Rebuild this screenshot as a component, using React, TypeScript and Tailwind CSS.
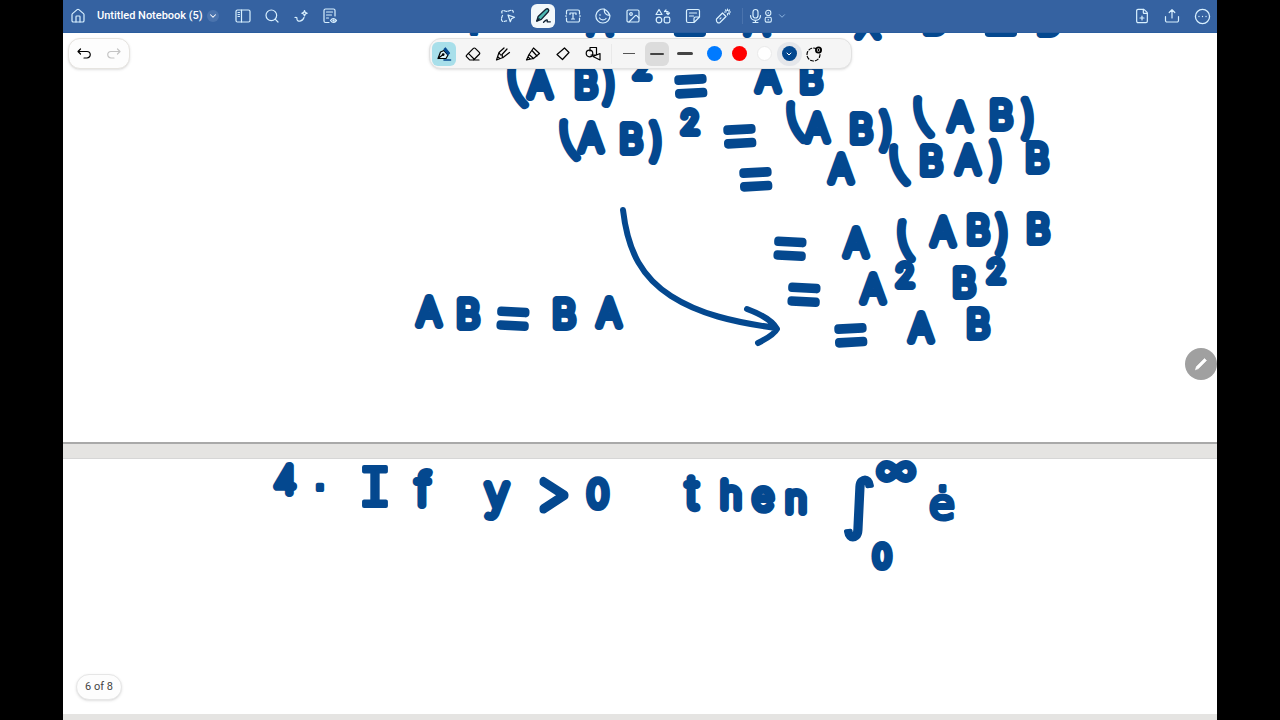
import type { ReactNode } from "react";
import {
  ChevronDown,
  CircleEllipsis,
  Eraser,
  FilePlus,
  House,
  Image,
  Search,
} from "lucide-react";

type Kind = "letter" | "small" | "bracket" | "equals" | "serif" | "tall" | "wide" | "angle" | "dotted";
type Mark = [char: string, x: number, y: number, kind?: Kind, angle?: number];

const kinds: Record<Kind, string> = {
  letter: "font-['Inter'] font-thin text-[36px] stroke-[8px]",
  small: "font-['Inter'] font-thin text-[30px] stroke-[8px]",
  bracket: "font-['Inter'] font-thin text-[42px] stroke-[8px]",
  equals: "font-['Inter'] font-thin text-[72px] stroke-[8px]",
  serif: "font-['DejaVu_Sans_Mono'] text-[54px] stroke-[4px]",
  tall: "font-['DejaVu_Sans'] text-[64px] stroke-[4px]",
  wide: "font-['Inter'] font-thin text-[44px] stroke-[8px]",
  angle: "font-['Inter'] font-thin text-[54px] stroke-[8px]",
  dotted: "font-['DejaVu_Sans'] text-[42px] stroke-[4px]",
};

const proof: Mark[][] = [
  [[".", 474, 34, "dotted"], ["A", 600, 34], ["=", 690, 46, "equals"], ["A", 757, 34], ["X", 868, 37], ["B", 934, 33], ["=", 1001, 46, "equals"], ["B", 1048, 34]],
  [["(", 520, 103, "bracket", -20], ["A", 540, 97], ["B", 586, 97], [")", 609, 98, "bracket"], ["2", 642, 78, "small"], ["=", 692, 108, "equals", -3], ["A", 768, 91], ["B", 811, 92]],
  [["(", 572, 156, "bracket", -20], ["A", 591, 151], ["B", 631, 152], [")", 656, 155, "bracket"], ["2", 690, 133, "small"], ["=", 741, 158, "equals", -3], ["(", 799, 138, "bracket", -20], ["A", 817, 141], ["B", 861, 142], [")", 886, 144, "bracket"], ["(", 926, 133, "bracket", -20], ["A", 960, 130], ["B", 1001, 128], [")", 1028, 132, "bracket"]],
  [["=", 757, 201, "equals", -3], ["A", 841, 182], ["(", 902, 181, "bracket", -20], ["B", 931, 174], ["A", 968, 173], [")", 996, 174, "bracket"], ["B", 1037, 171]],
  [["=", 789, 268, "equals", 3], ["A", 856, 256], ["(", 907, 256, "bracket", -14], ["A", 943, 245], ["B", 978, 243], [")", 1002, 247, "bracket"], ["B", 1038, 242]],
  [["=", 803, 314, "equals", 3], ["A", 873, 302], ["2", 905, 286, "small"], ["B", 964, 296], ["2", 996, 282, "small"]],
  [["=", 852, 357, "equals", -3], ["A", 921, 341], ["B", 978, 337]],
  [["A", 429, 325], ["B", 468, 327], ["=", 512, 338, "equals", 3], ["B", 564, 327], ["A", 609, 326]],
];

const question: Mark[][] = [
  [["4", 285, 493], [".", 320, 490, "dotted"]],
  [["I", 375, 506, "serif"], ["f", 423, 505, "wide"]],
  [["y", 497, 508, "wide"], [">", 553, 511, "angle"], ["0", 598, 507]],
  [["t", 692, 508, "wide"], ["h", 731, 508], ["e", 763, 509], ["n", 796, 512]],
  [["∫", 859, 526, "tall"], ["∞", 896, 485, "wide"], ["0", 882, 567, "small"]],
  [["ė", 942, 519, "dotted"]],
];

function Ink({ lines }: { lines: Mark[][] }) {
  return (
    <g className="fill-[#04488f] stroke-[#04488f]" strokeLinejoin="round" textAnchor="middle">
      {lines.map((line, i) => (
        <text key={i}>
          {line.map(([char, x, y, kind = "letter", angle = 0], j) => (
            <tspan key={j} x={x} y={y} rotate={angle} className={kinds[kind]}>
              {char}
            </tspan>
          ))}
        </text>
      ))}
    </g>
  );
}

function Glyph({ children, size = "size-4" }: { children: ReactNode; size?: string }) {
  return (
    <svg
      viewBox="0 0 16 16"
      className={size}
      fill="none"
      stroke="currentColor"
      strokeWidth="1.2"
      strokeLinecap="round"
      strokeLinejoin="round"
    >
      {children}
    </svg>
  );
}

function Tool({ label, width = "w-[30px]", children }: { label: string; width?: string; children: ReactNode }) {
  return (
    <button type="button" aria-label={label} className={`flex h-6 shrink-0 items-center justify-center ${width}`}>
      {children}
    </button>
  );
}

function Header() {
  return (
    <header className="grid h-[33px] shrink-0 grid-cols-[1fr_auto_1fr] items-center border-b border-[#2a5d9e] bg-[#3562a1] text-[#d8f0ff]">
      <div className="flex items-center">
        <Tool label="Home">
          <House className="size-4" strokeWidth={1.8} />
        </Tool>
        <button type="button" className="mr-2.5 ml-1 flex items-center gap-1 font-['Roboto',sans-serif] text-[11px] font-medium whitespace-nowrap text-white">
          Untitled Notebook (5)
          <span className="flex size-3 items-center justify-center rounded-full bg-[#4a73ad]">
            <ChevronDown className="size-2.5" strokeWidth={2.5} />
          </span>
        </button>
        <Tool label="Sidebar" width="w-[29px]">
          <Glyph>
            <rect x="1" y="2" width="14" height="12" rx="1.5" />
            <path d="M6.5 2v12M3 4.5h1.5M3 6.5h1.5M3 8.5h1.5" />
          </Glyph>
        </Tool>
        <Tool label="Search" width="w-[29px]">
          <Search className="size-4" strokeWidth={1.8} />
        </Tool>
        <Tool label="Ask AI" width="w-[29px]">
          <Glyph>
            <path d="M2 9.5c2-.7 2 .5 2 2 .3 2.5 5.5 2.5 7-2M11.5 2.5l.8 1.9 1.9.8-1.9.8-.8 1.9-.8-1.9-1.9-.8 1.9-.8z" />
          </Glyph>
        </Tool>
        <Tool label="Outline" width="w-[29px]">
          <Glyph>
            <path d="M7 14.5H3.5A1.5 1.5 0 0 1 2 13V2.5A1.5 1.5 0 0 1 3.5 1h8A1.5 1.5 0 0 1 13 2.5V8M4.5 4h6M4.5 7h5M4.5 10h2" />
            <path d="M8.5 12.5q2.7-4 6 0-3.3 4-6 0z" />
            <circle cx="11.5" cy="12.5" r=".6" />
          </Glyph>
        </Tool>
      </div>

      <div className="flex items-center">
        <div className="mr-[5px]">
          <Tool label="Lasso">
            <Glyph>
              <path d="M2 5c-1-2 1-3 3-2s3 0 5-.5 4 0 3 2.5M2.5 7.5c-1.5 3-1.5 6 1 6s2-1 3.5-.5" strokeDasharray="2.5 1.5" />
              <path d="M8 7l6.5 2.2-3 1.5-1.2 3z" />
            </Glyph>
          </Tool>
        </div>
        <button type="button" aria-label="Pen" aria-pressed="true" className="mx-[3px] flex size-6 items-center justify-center rounded-md bg-[#f3f8fb] text-[#123]">
          <Glyph size="size-[18px]">
            <path d="M2.5 12.5l1.2-4L10.500 2q1.300-1 2.200 0t0 2.200L6.500 11z" fill="#4fb9b3" />
            <path d="M2.5 12.5l2-2M8.500 13.5c2-2 3-2.500 3.300-1.500s-1.500 1.500 2.700 1.200" />
          </Glyph>
        </button>
        <Tool label="Text box">
          <Glyph>
            <path d="M1.5 6V3.5A1.5 1.5 0 0 1 3 2h10a1.5 1.5 0 0 1 1.5 1.5V6m0 4v2.5A1.5 1.5 0 0 1 13 14H3a1.5 1.5 0 0 1-1.5-1.5V10M5 6.5V5h6v1.5M8 5v6M6.5 11h3M1 7.5v1M15 7.5v1" />
          </Glyph>
        </Tool>
        <Tool label="Sticker">
          <Glyph>
            <path d="M9.5 1.2A7 7 0 1 0 14.9 7.5M9.5 1.2c-.8 3.5 1.5 6.3 5.4 6.3M9.5 1.2q4 2 5.4 6.3M4.5 10c1.5 2.5 5 2.5 6.5.5M5 6.5v.8" />
          </Glyph>
        </Tool>
        <Tool label="Image">
          <Image className="size-4" strokeWidth={1.8} />
        </Tool>
        <Tool label="Elements">
          <Glyph>
            <path d="M4 1.5L7 6.5H1zM9.5 3.5h3.5v3M9.5 3.5l1.5-1.5M13 6.5l1.5-1.5M13 6.5l-1.5-1.5" />
            <circle cx="4" cy="12" r="2.8" />
            <rect x="9.2" y="9.2" width="5.6" height="5.6" rx="1.5" />
          </Glyph>
        </Tool>
        <Tool label="Sticky note">
          <Glyph>
            <path d="M14.5 9V3A1.5 1.5 0 0 0 13 1.5H3A1.5 1.5 0 0 0 1.5 3v10A1.5 1.5 0 0 0 3 14.5h6zM14.5 9H10.5A1.5 1.5 0 0 0 9 10.5v4M4.5 5h7M4.5 8h4" />
          </Glyph>
        </Tool>
        <Tool label="Laser pointer">
          <Glyph>
            <path d="M7.5 5l3.5 3.5-6 6q-1.5 1-2.7-.2t-.8-3.3z" />
            <path d="M6 9.8l-1 1M12.5 1v1.5M12.5 5.5V7M9.5 4H11M14 4h1.5M10.5 2l.8.8M14.5 2l-.8.8M14.5 6l-.8-.8" />
          </Glyph>
        </Tool>
        <span className="mx-1 h-4 w-px bg-[#4a73ad]" />
        <button type="button" aria-label="Record" className="flex h-6 w-10 items-center justify-center">
          <Glyph>
            <rect x="6" y="1.5" width="5" height="8.5" rx="2.5" />
            <path d="M3.5 7.5c0 6.5 10 6.5 10 0M8.5 12.5v2M6 14.5h5" />
          </Glyph>
          <Glyph size="size-3.5">
            <circle cx="6" cy="4.5" r="3" />
            <rect x="2.5" y="9.5" width="7" height="5.5" rx="1.5" />
            <path d="M6 4.5v.1M6 12.2v.1" strokeWidth="1.6" />
          </Glyph>
          <ChevronDown className="size-2.5 text-[#9cc3ea]" />
        </button>
      </div>

      <div className="flex items-center justify-end">
        <Tool label="Add page">
          <FilePlus className="size-4" strokeWidth={1.8} />
        </Tool>
        <Tool label="Share">
          <Glyph>
            <path d="M1.5 8.5v4A1.5 1.5 0 0 0 3 14h10a1.5 1.5 0 0 0 1.5-1.5v-4M8 10V1.8M5.2 4.5L8 1.7l2.8 2.8" />
          </Glyph>
        </Tool>
        <Tool label="More">
          <CircleEllipsis className="size-[17px]" strokeWidth={1.8} />
        </Tool>
      </div>
    </header>
  );
}

function PenBar() {
  return (
    <div className="absolute inset-x-0 top-[5px] mx-auto flex h-[31px] w-fit items-center rounded-xl border border-[#e2e2e2] bg-[#f5f5f5] pr-6 text-black shadow-sm">
      <button type="button" aria-label="Fountain pen" aria-pressed="true" className="mx-0.5 flex size-6 items-center justify-center rounded-md bg-[#a8dfea]">
        <Glyph>
          <path d="M2 12.5L4.5 6l3.500-1.500L12 9l-2 3.500zM2 12.5L6.500 9" fill="#dff5fa" />
          <path d="M8 3.500l1.500-1.500 4 5-1.500 1.500z" fill="#04488f" stroke="#04488f" />
          <path d="M8 14h6.5" stroke="#04488f" strokeWidth="1.6" />
          <circle cx="7.2" cy="8.6" r=".8" fill="currentColor" />
        </Glyph>
      </button>
      <Tool label="Eraser">
        <Eraser className="size-4" strokeWidth={1.8} />
      </Tool>
      <Tool label="Brush">
        <Glyph>
          <path d="M1.5 14L4 6.500 9 2M1.5 14l6.500-2.500L14.5 6.500M4 6.500l1.500 2.500h1.800v1.800L8 11.500M7 8.500l5-5.500M3 11l1.800 1.500" />
        </Glyph>
      </Tool>
      <Tool label="Highlighter">
        <Glyph>
          <path d="M1.5 14l2.500-5.500L8.5 2l6 5.500-6 5zM4 8.5l4.5 4M7 4.500l5 5.500M3 11l2 1.800" />
        </Glyph>
      </Tool>
      <Tool label="Tape">
        <Glyph>
          <path d="M9.5 2l4.5 4.5-6.5 7L2 8.5z" />
        </Glyph>
      </Tool>
      <Tool label="Shapes">
        <Glyph>
          <circle cx="4.5" cy="7.5" r="3.3" />
          <path d="M5 5V1.5h6.5V9H6M8 10.5l7-3v6.5z" />
        </Glyph>
      </Tool>
      <span className="mx-[3px] h-5 w-px bg-[#e9e9e9]" />
      <button type="button" aria-label="Thin" className="flex h-6 w-7 items-center justify-center">
        <span className="h-px w-3 bg-[#555]" />
      </button>
      <button type="button" aria-label="Medium" aria-pressed="true" className="mx-0.5 flex size-6 items-center justify-center rounded-md bg-[#dcdcdc]">
        <span className="h-0.5 w-3.5 rounded bg-[#444]" />
      </button>
      <button type="button" aria-label="Thick" className="flex h-6 w-7 items-center justify-center">
        <span className="h-[3px] w-4 rounded bg-[#444]" />
      </button>
      <div className="ml-[3px] flex items-center *:flex *:h-6 *:w-[25px] *:items-center *:justify-center">
        <button type="button" aria-label="Blue">
          <span className="size-[15px] rounded-full bg-[#007aff]" />
        </button>
        <button type="button" aria-label="Red">
          <span className="size-[15px] rounded-full bg-[#ff0000]" />
        </button>
        <button type="button" aria-label="White">
          <span className="size-[15px] rounded-full border border-[#eaeaea] bg-white" />
        </button>
        <button type="button" aria-label="Navy" aria-pressed="true" className="rounded-full bg-[#e4e6ea]">
          <span className="flex size-[15px] items-center justify-center rounded-full bg-[#04488f] text-white">
            <ChevronDown className="size-2" strokeWidth={3} />
          </span>
        </button>
        <button type="button" aria-label="Add colour">
          <Glyph>
            <circle cx="7.5" cy="8.5" r="6.5" strokeDasharray="3 2" />
            <circle cx="12.5" cy="4" r="2.6" strokeWidth="1.8" fill="#fff" />
            <path d="M12.5 3.2v1.6M11.7 4h1.6" strokeWidth="1" />
          </Glyph>
        </button>
      </div>
    </div>
  );
}

export default function App() {
  return (
    <div className="flex h-screen flex-col bg-black px-[63px] font-['Inter',sans-serif]">
      <Header />
      <main className="relative flex-1 overflow-hidden bg-[#e5e4e2]">
        <section className="border-b-2 border-[#a9a9a9] bg-white">
          <svg viewBox="63 33 1154 409" className="block w-full">
            <Ink lines={proof} />
            <path
              d="M623 210c5 43 20 68 48 86s62 26 105 32M747 309q24 9 30 20-3 6-19 14"
              fill="none"
              stroke="#04488f"
              strokeWidth="6"
              strokeLinecap="round"
              strokeLinejoin="round"
            />
          </svg>
        </section>
        <section className="mt-3.5 border-t border-[#d6d6d6] bg-white">
          <svg viewBox="63 459 1154 255" className="block w-full">
            <Ink lines={question} />
          </svg>
        </section>

        <div className="absolute top-[5px] left-[5px] flex h-[31px] items-center rounded-xl border border-[#e6e4e0] bg-[#fdfdfd] shadow-sm">
          <Tool label="Undo">
            <Glyph>
              <path d="M4.5 3L2 5.5 4.5 8M2 5.5h9a3.2 3.2 0 0 1 0 6.5H8" />
            </Glyph>
          </Tool>
          <button type="button" aria-label="Redo" disabled className="flex h-6 w-[30px] items-center justify-center text-[#c4c4c4]">
            <Glyph>
              <path d="M11.5 3L14 5.5 11.5 8M14 5.5H5A3.2 3.2 0 0 0 5 12h3" />
            </Glyph>
          </button>
        </div>
        <PenBar />
        <button type="button" aria-label="Edit" className="absolute top-[315px] right-0 flex size-8 items-center justify-center rounded-full bg-[#a0a0a0] text-white">
          <Glyph>
            <path d="M2.5 13.5l1-3L11.5 2.5l2 2L5.5 12.5z" fill="currentColor" strokeWidth=".6" />
          </Glyph>
        </button>
        <div className="absolute bottom-5 left-[13px] rounded-full border border-[#e6e6e6] bg-[#fdfdfd] px-2 py-1 font-['Roboto',sans-serif] text-[11px] leading-4 text-[#444] shadow-sm">
          6 of 8
        </div>
      </main>
    </div>
  );
}
